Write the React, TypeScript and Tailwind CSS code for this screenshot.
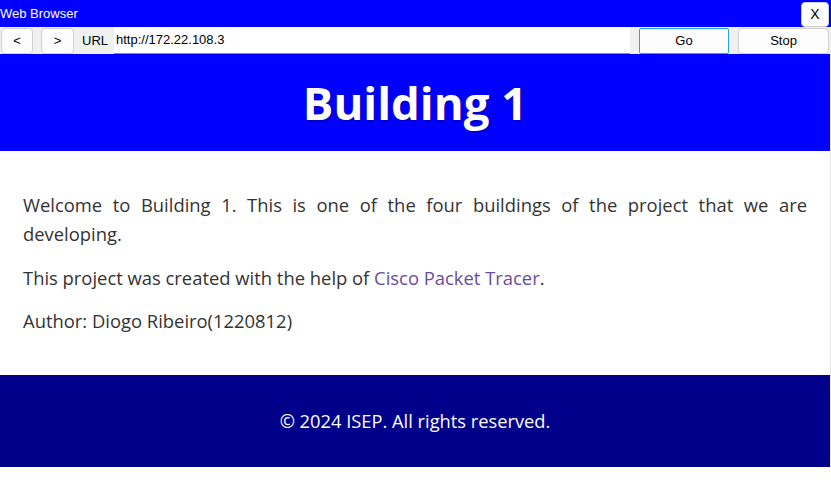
export default function App() {
  return (
    <div className="w-[831px] h-[490px] bg-white overflow-hidden font-['Liberation_Sans',Arial,sans-serif]">
      {/* window title bar */}
      <div className="h-[27px] bg-[#0000ff] flex items-center justify-between pr-[2px]">
        <span className="text-white text-[13px] leading-none">Web Browser</span>
        <button className="w-[28px] h-[25px] mt-[1px] bg-white rounded-[4px] border border-[#d0d0d0] text-[14px] text-black leading-none">
          X
        </button>
      </div>

      {/* toolbar */}
      <div className="h-[27px] bg-[#f0f0f0] flex items-center text-[13px] text-black">
        <button className="ml-[1px] w-[32px] h-[26px] bg-[#fdfdfd] border border-[#d0d0d0] rounded-[4px]">&lt;</button>
        <button className="ml-[8px] w-[33px] h-[26px] bg-[#fdfdfd] border border-[#d0d0d0] rounded-[4px]">&gt;</button>
        <span className="ml-[8px] w-[32px]">URL</span>
        <div className="flex-1 h-[27px] bg-white border-b border-[#8a8a8a] flex items-center pl-[2px]">
          http://172.22.108.3
        </div>
        <button className="ml-[9px] w-[90px] h-[26px] bg-[#fdfdfd] border border-[#22a7d6] rounded-[2px]">Go</button>
        <button className="ml-[9px] mr-[2px] w-[91px] h-[26px] bg-[#fdfdfd] border border-[#d0d0d0] rounded-[4px]">Stop</button>
      </div>

      {/* page */}
      <div className="w-[831px] border-r border-[#e6e6e6] font-['Segoe_UI','Open_Sans',sans-serif]">
        <div className="h-[97px] bg-[#0000ff] flex items-center justify-center">
          <h1 className="text-white text-[45.5px] font-bold [text-shadow:1px_1px_2px_rgba(0,0,0,0.35)]">Building 1</h1>
        </div>

        <div className="px-[23px] pt-[40px] pb-[24px] text-[18.4px] leading-[28.8px] text-[#333]">
          <p className="mb-[15px] text-justify">
            Welcome to Building 1. This is one of the four buildings of the project that we are developing.
          </p>
          <p className="mb-[15px]">
            This project was created with the help of{" "}
            <a href="#" className="text-[#6a4c9c]">Cisco Packet Tracer</a>.
          </p>
          <p className="mb-[15px]">Author: Diogo Ribeiro(1220812)</p>
        </div>

        <div className="h-[92px] bg-[#00008b] flex items-center justify-center">
          <p className="text-white text-[18.3px]">© 2024 ISEP. All rights reserved.</p>
        </div>
      </div>
    </div>
  );
}
